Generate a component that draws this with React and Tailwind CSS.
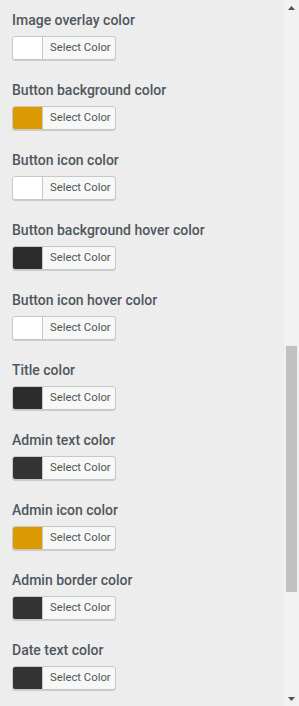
import React from 'react';

const rows = [
    { label: 'Image overlay color', color: '#ffffff' },
    { label: 'Button background color', color: '#dc9a02' },
    { label: 'Button icon color', color: '#ffffff' },
    { label: 'Button background hover color', color: '#2c2c2c' },
    { label: 'Button icon hover color', color: '#ffffff' },
    { label: 'Title color', color: '#2c2c2c' },
    { label: 'Admin text color', color: '#333333' },
    { label: 'Admin icon color', color: '#dc9a02' },
    { label: 'Admin border color', color: '#333333' },
    { label: 'Date text color', color: '#333333' },
];

const ColorField = ({ label, color }) => (
    <div className="pb-5">
        <div className="h-5 leading-5 text-[14px] font-medium text-[#50575e] whitespace-nowrap">{label}</div>
        <button className="mt-1.5 flex h-6 w-[104px] items-stretch overflow-hidden rounded-[3px] border border-[#c8c8c8] bg-[#f6f7f7] shadow-[0_1px_0_#cccccc]">
            <span className="w-[30px] border-r border-[#c8c8c8]" style={{ backgroundColor: color }} />
            <span className="flex-1 pl-[7px] text-left text-[11.3px] leading-[22px] text-[#555555]">Select Color</span>
        </button>
    </div>
);

export default function App() {
    return (
        <div className="flex h-[706px] w-[299px] overflow-hidden bg-[#ededed] font-['Roboto',sans-serif]">
            <div className="flex-1 pl-3 pt-[10px]">
                {rows.map(r => (
                    <ColorField key={r.label} label={r.label} color={r.color} />
                ))}
            </div>
            <div className="flex w-[15px] flex-col items-center bg-[#f1f1f1]">
                <div className="flex h-[15px] items-center justify-center">
                    <svg width="7" height="4" viewBox="0 0 7 4"><path d="M3.5 0 L7 4 L0 4 Z" fill="#505050" /></svg>
                </div>
                <div className="h-[331px]" />
                <div className="h-[246px] w-[11px] bg-[#c1c1c1]" />
                <div className="flex-1" />
                <div className="flex h-[15px] items-center justify-center">
                    <svg width="7" height="4" viewBox="0 0 7 4"><path d="M0 0 L7 0 L3.5 4 Z" fill="#505050" /></svg>
                </div>
            </div>
        </div>
    );
}
